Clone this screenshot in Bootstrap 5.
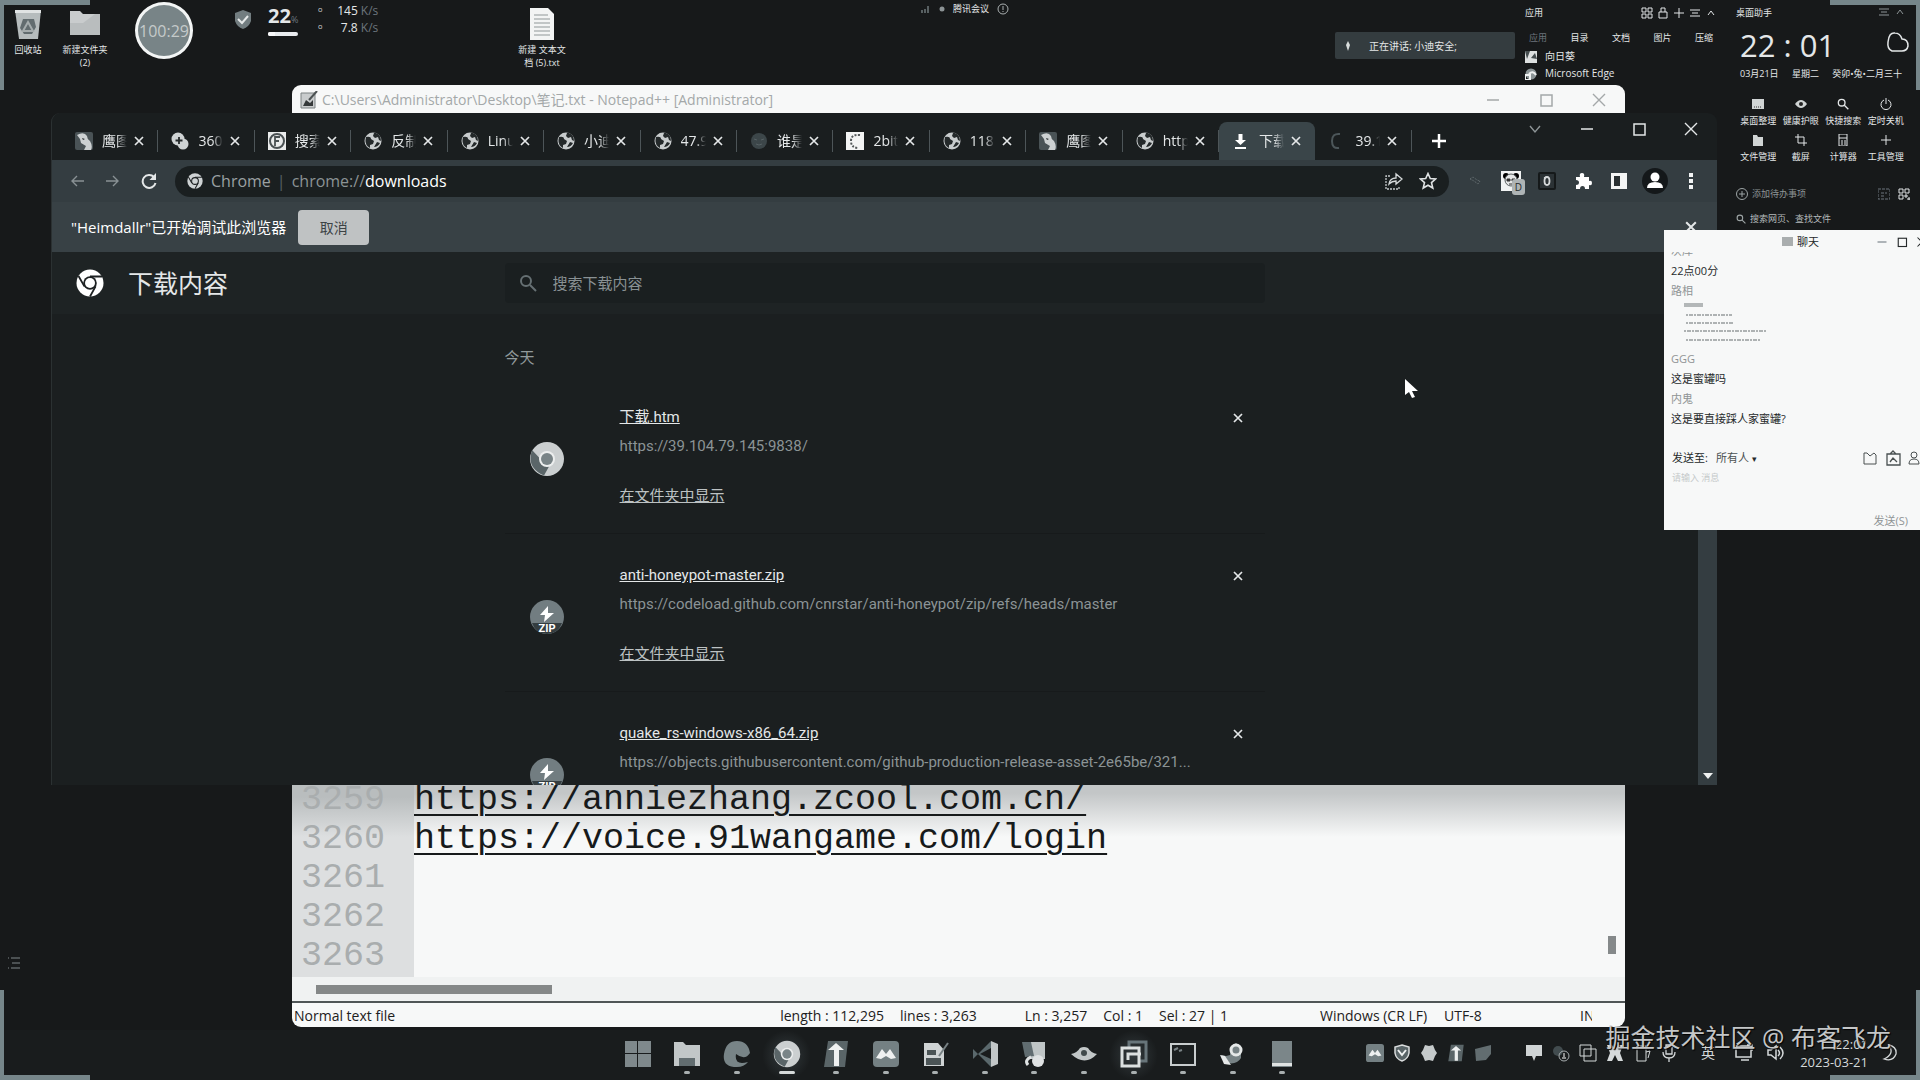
<!DOCTYPE html>
<html lang="zh-CN">
<head>
<meta charset="utf-8">
<meta name="viewport" content="width=device-width, initial-scale=1">
<title>桌面</title>
<link rel="stylesheet" href="https://cdn.jsdelivr.net/npm/bootstrap@5.3.0/dist/css/bootstrap.min.css">
<style>
:root{--ink:#17191a;--strip:#1a1e1f;--bar:#343d41;--pale:#f7f8f8;--soft:#b9bdbe;--dim:#7d8588}
body{background:var(--ink);color:#e4e7e8;font-family:"Open Sans","Noto Sans CJK SC",sans-serif;font-size:14px;line-height:20px}
.desk{min-height:100vh;overflow:hidden}
svg{display:block;flex:none}
.i10{width:10px;height:10px}.i12{width:12px;height:12px}.i16{width:16px;height:16px}.i18{width:18px;height:18px}.i28{width:28px;height:28px}.i36{width:36px;height:36px}
.ln{fill:none;stroke:currentColor;stroke-width:2}
.bare{background:none;border:0;padding:0;color:inherit;display:flex;align-items:center;justify-content:center;flex:none}
a{color:inherit}
.brk{position:absolute;width:90px;height:90px;border:0 solid #76868a}
.brk-tl{left:0;top:0;border-left-width:4px;border-top-width:5px}
.brk-tr{right:0;top:0;border-right-width:4px;border-top-width:5px}
.brk-bl{left:0;bottom:0;border-left-width:4px;border-bottom-width:5px;z-index:6}
.brk-br{right:0;bottom:0;border-right-width:4px;border-bottom-width:5px;z-index:6}
.tiny{font-size:9px;line-height:13px}
.sm11{font-size:11px;line-height:17px}
/* desktop shortcuts and widgets */
.shortcut{position:absolute;top:7px;width:56px;text-align:center;text-decoration:none}
.shortcut svg{margin:0 auto 2px}
.timer{position:absolute;left:135px;top:2px;width:58px;height:57px;border:3px solid #f3f5f5;border-radius:50%;background:#788487;color:#c5caca;font-size:16px}
.netbox{position:absolute;left:234px;top:2px}
.speed{font-size:12px;line-height:17px;width:52px}
.meet{position:absolute;left:921px;top:2px}
.talk{position:absolute;right:405px;top:32px;width:180px;height:27px;background:#343c3f;border-radius:2px;font-size:10px}
.apps{position:absolute;right:203px;top:6px;width:192px}
.helper{position:absolute;right:10px;top:6px;width:178px}
.clock{font-size:31px;line-height:36px}
.toolgrid{display:grid;grid-template-columns:repeat(4,1fr);row-gap:7px;margin-top:18px;padding:0 3px 0 5px}
.leftlist{position:absolute;left:8px;bottom:111px;color:#5d6365}
/* notepad window */
.note{position:absolute;left:292px;right:295px;top:85px;bottom:53px;background:var(--pale);border-radius:9px;color:#222627;overflow:hidden}
.note-title{height:30px;color:#a4a8a9;font-size:14px;padding-left:8px}
.note-title .bare{width:53px}
.editor{font-family:"Liberation Mono",monospace;font-size:35px;line-height:39px;background:linear-gradient(to top,#f7f8f8 140px,#c3c6c7 184px)}
.gutter{width:122px;padding:0 0 0 9px;color:#a9adae;background:linear-gradient(to top,#dddfe0 140px,#b9bdbe 180px);white-space:pre}
.gutter,.lines{display:flex;flex-direction:column;justify-content:flex-end;padding-bottom:1px}
.lines a{color:#171a1b;text-decoration-thickness:2px;text-underline-offset:5px}
.lines span,.lines a{display:block;height:39px;white-space:pre}
.vthumb{position:absolute;right:9px;bottom:73px;width:8px;height:18px;background:#85898a}
.hscroll{height:24px;background:#f0f2f2;padding:8px 24px}
.hthumb{width:236px;height:9px;background:#858888}
.status{height:26px;border-top:2px solid #505657;font-size:14px;line-height:25px;color:#1d2021;white-space:nowrap;padding-left:2px}
/* browser window */
.chrome{position:absolute;left:51px;right:203px;top:113px;height:672px;background:var(--strip);border-radius:9px 9px 0 0;overflow:hidden;border-left:1px solid #2b3132}
.chrome>*{flex-shrink:0}
.strip{height:47px;padding:9px 0 0 10px}
.tabset{width:1350px}
.newtab{margin-left:20px}
.tabx{flex:1 1 0;height:38px;padding:0 14px 0 13px;border-radius:8px 8px 0 0;position:relative}
.tabx::after{content:"";position:absolute;right:0;top:8px;height:22px;border-right:1px solid #4d5558}
.tabx.on{background:#3a4549}.tabx.on::after{border:0}
.tabname{width:25px;margin-left:9px;overflow:hidden;white-space:nowrap;font-size:14px;-webkit-mask:linear-gradient(to right,#000 60%,transparent)}
.tabx .bare{margin-left:7px}
.winbtn{width:52px;height:32px}
.tools{height:42px;background:var(--bar);padding-left:7px}
.omni{height:31px;border-radius:16px;background:#1a1f20;padding:0 12px;font-size:16px}
.omni input{background:none;border:0;color:#fff;width:120px;padding:0;outline:0}
.bar-sep{margin:0 6px;color:#566063}
.extb{width:36px;height:30px}
.dbadge{position:absolute;left:19px;top:13px;width:13px;height:16px;border-radius:3px;background:#aeb4b5;color:#24292a;font-size:10px;line-height:16px;text-align:center}
.infobar{height:50px;background:#384145;padding:0 20px 0 19px;font-size:15px}
.cancel{width:71px;height:35px;background:#bfc2c3;color:#3c4345;border-radius:4px;font-size:14px;margin-left:12px}
.pagehead,.pagecols{display:grid;grid-template-columns:1fr 760px 1fr}
.pagehead{height:62px;background:#1e2324}
.finder{height:40px;background:#1a1f20;border-radius:4px;padding:0 14px}
.finder input{background:none;border:0;color:#dfe2e3;font-size:15px;outline:0;padding:0}
.finder input::placeholder{color:#899194;opacity:1}
.pagebody{flex:1 1 0;min-height:0;background:#1b1f20;font-family:Roboto,"Noto Sans CJK SC",sans-serif;font-size:15px;position:relative;padding-top:34px}
.dl{height:158px;padding:29px 18px 0 24px;border-bottom:1px solid #171a1b}
.dl-pic{margin-top:36px}
.dl-text{margin-left:55px;line-height:24px}
.dl-url{color:#8b9395;margin-top:5px}
.dl-open{margin-top:26px;color:#bdc2c3}
.pagebar{position:absolute;right:0;top:0;bottom:0;width:19px;background:var(--bar)}
.cursor{position:absolute;left:1404px;top:379px}
/* chat window */
.chat{position:absolute;right:0;top:230px;width:256px;height:300px;background:var(--pale);color:#262a2b;overflow:hidden;font-size:11px;z-index:3}
.chat-head{height:23px;padding-left:118px;flex:none}
.chat-log{padding-left:7px;margin-top:-12px}
.chat-log div{height:20px;line-height:20px}
.cut{clip-path:inset(11px 0 0 0)}
.chat .who{color:#8f9495}
.chat select{border:0;background:none;color:#4b5152;font-size:11px;width:36px;padding:0;appearance:none}
.chat textarea{border:0;background:none;resize:none;height:44px;padding:0 8px;outline:0;font-size:9px}
.chat textarea::placeholder{color:#c5c9ca}
.send{height:18px}
/* taskbar */
.task{position:absolute;left:0;right:0;bottom:0;height:50px;background:#191c1d}
.dock{width:694px;height:50px;margin:0 auto}
.dock .bare{flex:1;flex-direction:column;padding-top:4px}
.pip{width:6px;height:3px;background:#a9afb0;border-radius:2px;margin-top:3px}
.pip.wide{width:16px;background:#d5d9d9}
.dock .lit{background:radial-gradient(#333a3d,transparent 70%)}
.tray{position:absolute;right:10px;top:0;height:46px;color:#d5d9da}
.tray .bare{width:27px}
.tray .w36{width:36px}
.when{width:79px;font-size:13px;line-height:18px;text-align:right}
.wmark{position:absolute;right:29px;bottom:24px;font-size:25px;line-height:38px;color:#c4c6c7;z-index:7;white-space:nowrap;text-shadow:1px 1px 1px #000}
</style>
<script src="https://cdn.jsdelivr.net/npm/bootstrap@5.3.0/dist/js/bootstrap.bundle.min.js"></script>
</head>
<body>
<svg width="0" height="0" class="position-absolute" aria-hidden="true">
<symbol id="x" viewBox="0 0 10 10"><path d="M1 1l8 8M9 1L1 9" fill="none" stroke="currentColor" stroke-width="1.7"/></symbol>
<symbol id="xt" viewBox="0 0 16 16"><path d="M2 2l12 12M14 2L2 14" fill="none" stroke="currentColor" stroke-width="1.4"/></symbol>
<symbol id="min" viewBox="0 0 16 16"><path d="M2 8h12" stroke="currentColor" stroke-width="1.4"/></symbol>
<symbol id="max" viewBox="0 0 16 16"><rect x="3" y="3" width="11" height="11" fill="none" stroke="currentColor" stroke-width="1.5"/></symbol>
<symbol id="globe" viewBox="0 0 18 18"><circle cx="9" cy="9" r="8.5" fill="#c8cccd"/><path d="M2 5q5-1 5 2l3 2-1 3-3 1v3Q1 13 1.500 8zM10 1l-1 3 2 2 3-1 1 3 2 1q0-6-5-8zM13 10l-3 5q4 0 6-4z" fill="#24292a"/></symbol>
<symbol id="crm" viewBox="0 0 28 28"><circle cx="14" cy="14" r="13.500" fill="currentColor"/><circle cx="14" cy="14" r="6.800" fill="#1d2122"/><circle cx="14" cy="14" r="5" fill="currentColor"/><path d="M14 7.500h12M8.400 17.400L2.500 7M19.600 17.400L14 27.500" stroke="#1d2122" stroke-width="1.800"/></symbol>
<symbol id="eagle" viewBox="0 0 18 18"><rect width="18" height="18" rx="2" fill="#4a5356"/><path d="M2 3q7-4 10 1 0 3 3 5 3 5 1 9H9l2-4-5-3-1-4z" fill="#cdd1d2"/><path d="M7 6l3 1-2 1z" fill="#24292a"/></symbol>
<symbol id="plus3" viewBox="0 0 18 18"><circle cx="7" cy="7" r="6.500" fill="#cfd3d4"/><circle cx="12" cy="12" r="5.500" fill="#cfd3d4"/><path d="M8 5v7M4.500 8.500h7" stroke="#24292a" stroke-width="1.800"/></symbol>
<symbol id="fic" viewBox="0 0 18 18"><rect width="18" height="18" fill="#e9ebeb"/><circle cx="9" cy="9" r="7" fill="none" stroke="#4a5153" stroke-width="2"/><path d="M7 14V5h5M7 9h4" fill="none" stroke="#4a5153" stroke-width="1.800"/></symbol>
<symbol id="blob" viewBox="0 0 18 18"><circle cx="9" cy="9" r="8" fill="#3c4649"/><path d="M4 7l3 1m4 0l3-1M6 12q3 2 6 0" stroke="#566164" fill="none"/></symbol>
<symbol id="cring" viewBox="0 0 18 18"><rect width="18" height="18" fill="#f3f4f4"/><path d="M14 3Q5 2 5 9t8 7" fill="none" stroke="#54595b" stroke-width="2" stroke-dasharray="2 1.500"/></symbol>
<symbol id="down" viewBox="0 0 18 18"><path d="M6.500 2h4v6h3.500L8.500 13 3 8h3.500zM3 15h11v2H3z" fill="#fff"/></symbol>
<symbol id="load" viewBox="0 0 18 18"><path d="M12 2Q4 1 4 9t7 7" fill="none" stroke="#4c5659" stroke-width="2"/></symbol>
<symbol id="mag" viewBox="0 0 18 18"><circle cx="7" cy="7" r="5" class="ln"/><path d="M11 11l6 6" class="ln"/></symbol>
<symbol id="zip" viewBox="0 0 36 36"><circle cx="18" cy="18" r="17" fill="#727d81"/><path d="M3 24h30q-4 11-15 11T3 24z" fill="#343d40"/><path d="M19 7l-8 9h5l-1 7 10-9h-6z" fill="#fff"/></symbol>
<symbol id="dlc" viewBox="0 0 36 36"><circle cx="18" cy="18" r="17" fill="#cbcfd0"/><path d="M3 9Q-3 27 15 34.500l5-9q-8 0-9-8z" fill="#5a6568"/><circle cx="18" cy="18" r="8" fill="#eceeee"/><circle cx="18" cy="18" r="6" fill="#798487"/></symbol>
<symbol id="ebox" viewBox="0 0 18 18"><rect x="1" y="1" width="16" height="16" rx="1" fill="#2b3235" stroke="#15191a" stroke-width="2"/><ellipse cx="9" cy="9" rx="2.500" ry="4" fill="none" stroke="#d5d9da" stroke-width="1.800"/><path d="M6 6l3-1" stroke="#d5d9da" stroke-width="1.500"/></symbol>
</svg>
<main class="desk position-relative">
<i class="brk brk-tl"></i><i class="brk brk-tr"></i><i class="brk brk-bl"></i><i class="brk brk-br"></i>

<a href="#" class="shortcut tiny" style="left:0"><svg width="28" height="34" viewBox="0 0 28 34"><path d="M1 3h26l-3 29H5z" fill="#b6bcbd"/><path d="M1 3h26v3H1z" fill="#e0e3e3"/><path d="M9 12h11l2 8-4 7h-8l-4-6z" fill="#626c6f"/><path d="M9 24l5-9 5 9z" fill="none" stroke="#a5acad" stroke-width="2"/></svg>回收站</a>
<a href="#" class="shortcut tiny" style="left:57px"><svg width="32" height="34" viewBox="0 0 32 34"><path d="M1 4h10l3 3h17v21H1z" fill="#c9cccd"/><path d="M1 28V16h13L26 7h5v21z" fill="#b9bdbe"/></svg>新建文件夹<br>(2)</a>
<a href="#" class="shortcut tiny" style="left:514px"><svg width="26" height="34" viewBox="0 0 26 34"><path d="M1 1h18l6 6v26H1z" fill="#f3f4f4"/><path d="M5 8h14M5 12h16M5 16h16M5 20h16M5 24h16M5 28h16" stroke="#909798"/></svg>新建 文本文<br>档 (5).txt</a>
<div class="timer d-flex align-items-center justify-content-center">100:29</div>
<div class="netbox d-flex gap-3">
<svg class="mt-2" width="18" height="19" viewBox="0 0 18 19"><path d="M9 0l8 3v8q-2 6-8 8-6-2-8-8V3z" fill="#727d80"/><path d="M4 9l4 4 6-7" fill="none" stroke="#e6e9e9" stroke-width="2"/></svg>
<div class="pt-1"><b class="fs-5">22</b><span class="tiny text-secondary">%</span><div class="progress mt-1" style="height:4px;width:30px"><div class="progress-bar bg-light" style="width:22%"></div></div></div>
<div class="d-flex gap-1"><div class="speed" style="width:8px"><div>◦</div><div>◦</div></div><div class="speed text-end"><div>145 <span class="text-secondary">K/s</span></div><div>7.8 <span class="text-secondary">K/s</span></div></div></div>
</div>
<div class="meet tiny d-flex align-items-center gap-2"><svg class="i10" viewBox="0 0 10 10"><path d="M1 9V6m3 3V5m3 4V2" stroke="#586062" stroke-width="2"/></svg><svg width="6" height="8" viewBox="0 0 6 8"><circle cx="3" cy="4" r="2.500" fill="#8c9395"/></svg><span>腾讯会议</span><svg class="i12" viewBox="0 0 12 12"><circle cx="6" cy="6" r="5" fill="none" stroke="#aab0b1"/><path d="M6 3v4m0 1v1" stroke="#aab0b1"/></svg></div>
<div class="talk d-flex align-items-center"><svg class="ms-2 me-3 i10" viewBox="0 0 10 10"><path d="M5 0l2 4-2 6-2-6z" fill="#d8dcdc"/></svg>正在讲话: 小迪安全;</div>

<section class="apps tiny">
<div class="d-flex justify-content-between align-items-center mb-2"><span>应用</span><div class="d-flex gap-1"><svg class="i12" viewBox="0 0 12 12"><path d="M1 1h4v4H1zM7 1h4v4H7zM1 7h4v4H1zM7 7h4v4H7z" fill="none" stroke="currentColor"/></svg><svg class="i12" viewBox="0 0 12 12"><path d="M2 5h8v6H2zM4 5V1h4v4" fill="none" stroke="currentColor"/></svg><svg class="i12" viewBox="0 0 12 12"><path d="M6 1v10M1 6h10" stroke="currentColor"/></svg><svg class="i12" viewBox="0 0 12 12"><path d="M1 3h10M3 6h6M1 9h10" stroke="currentColor"/></svg><svg class="i12" viewBox="0 0 12 12"><path d="M3 8l3-4 3 4" fill="none" stroke="currentColor"/></svg></div></div>
<nav class="d-flex justify-content-between px-1 pt-1"><span class="text-secondary">应用</span><span>目录</span><span>文档</span><span>图片</span><span>压缩</span></nav>
<div class="sm11 d-flex align-items-center gap-1 mt-1"><svg class="i12 me-1" viewBox="0 0 12 12"><path d="M0 0h12v12H0z" fill="#dde0e0"/><path d="M0 0h5L2 8zM6 7l4-5 2 6z" fill="#454d4f"/></svg><span style="font-size:10px">向日葵</span></div>
<div class="sm11 d-flex align-items-center gap-1"><svg class="i12 me-1" viewBox="0 0 12 12"><circle cx="6" cy="6" r="5.500" fill="#8b9496"/><path d="M0 7h5v5H0zM4 6q4-4 7 1" fill="none" stroke="#eef0f0" stroke-width="2"/></svg><span style="font-size:10px">Microsoft Edge</span></div>
</section>

<section class="helper tiny">
<div class="d-flex justify-content-between ps-1"><span>桌面助手</span><div class="d-flex gap-1 pe-1"><svg class="i12" viewBox="0 0 12 12"><path d="M1 3h10M3 6h6M1 9h10" stroke="#8d9496"/></svg><svg class="i12" viewBox="0 0 12 12"><path d="M3 8l3-4 3 4" fill="none" stroke="#8d9496"/></svg></div></div>
<div class="d-flex justify-content-between align-items-start mt-1 ps-2"><div class="clock pt-1">22 : 01</div><svg class="mt-2" width="24" height="22" viewBox="0 0 24 22"><path d="M6 20q-5-2-4-9Q3 1 9 2q5 0 7 6 6 0 6 7-1 5-6 5z" fill="none" stroke="currentColor" stroke-width="1.500"/></svg></div>
<div class="d-flex justify-content-between ps-2 pe-2 mt-1"><span>03月21日</span><span>星期二</span><span>癸卯•兔•二月三十</span></div>
<div class="toolgrid text-center">
<div><svg class="i12 mx-auto mb-1" viewBox="0 0 12 12"><path d="M0 1h12v10H0z" fill="#d0d4d4"/><path d="M2 9h8" stroke="#333" stroke-dasharray="1 1"/></svg>桌面整理</div>
<div><svg class="i12 mx-auto mb-1" viewBox="0 0 12 12"><path d="M0 6q6-8 12 0-6 8-12 0z" fill="#d0d4d4"/><circle cx="6" cy="6" r="2" fill="#222"/></svg>健康护眼</div>
<div><svg class="i12 mx-auto mb-1"><use href="#mag"/></svg>快捷搜索</div>
<div><svg class="i12 mx-auto mb-1" viewBox="0 0 12 12"><path d="M4 2a5 5 0 1 0 4 0M6 0v6" fill="none" stroke="currentColor"/></svg>定时关机</div>
<div><svg class="i12 mx-auto mb-1" viewBox="0 0 12 12"><path d="M1 1h4l1 2h5v9H1z" fill="#d0d4d4"/></svg>文件管理</div>
<div><svg class="i12 mx-auto mb-1" viewBox="0 0 12 12"><path d="M3 0v9h9M0 3h9v9" fill="none" stroke="currentColor"/></svg>截屏</div>
<div><svg class="i12 mx-auto mb-1" viewBox="0 0 12 12"><path d="M2 0h8v12H2zM2 4h8M5 6v5M8 6v5" fill="none" stroke="currentColor"/></svg>计算器</div>
<div><svg class="i12 mx-auto mb-1" viewBox="0 0 12 12"><path d="M6 1v10M1 6h10" stroke="currentColor"/></svg>工具管理</div>
</div>
<div class="d-flex align-items-center gap-1 mt-4 ps-1"><svg class="i12" viewBox="0 0 12 12"><circle cx="6" cy="6" r="5.500" fill="none" stroke="#9da4a5"/><path d="M6 3v6M3 6h6" stroke="#9da4a5"/></svg><span class="me-auto" style="color:#8d9496">添加待办事项</span><svg class="i12 me-1 text-secondary" viewBox="0 0 12 12"><path d="M0 1h12v10H0zM3 5h6M3 8h4" fill="none" stroke="currentColor" stroke-dasharray="3 1"/></svg><svg class="i12" viewBox="0 0 12 12"><path d="M1 1h4v4H1zM7 1h4v4H7zM1 7h4v4H1zM7 7h2v2H7zM10 10h2v2h-2z" fill="none" stroke="currentColor"/></svg></div>
<div class="d-flex align-items-center gap-1 mt-2 pt-1 ps-1"><svg class="i10" style="color:#9da4a5"><use href="#mag"/></svg><span style="color:#b5babb">搜索网页、查找文件</span></div>
</section>
<svg class="leftlist" width="12" height="12" viewBox="0 0 12 12"><path d="M3 1h9M4 6h8M3 11h9M0 1h1M0 11h1" stroke="currentColor" stroke-width="1.500"/></svg>

<section class="note d-flex flex-column">
<header class="note-title d-flex align-items-center"><svg class="i18" viewBox="0 0 18 18"><path d="M1 2h14v15H1z" fill="#c9cccd" stroke="#7c8283"/><path d="M3 15l3-6 4 3 3-3v6z" fill="#35393a"/><path d="M9 9l8-9" stroke="#4c5253" stroke-width="2"/></svg><span class="me-auto ms-1 text-nowrap">C:\Users\Administrator\Desktop\笔记.txt - Notepad++ [Administrator]</span>
<button class="bare" aria-label="最小化"><svg class="i16"><use href="#min"/></svg></button><button class="bare" aria-label="最大化"><svg class="i16"><use href="#max"/></svg></button><button class="bare" aria-label="关闭"><svg class="i16"><use href="#xt"/></svg></button></header>
<div class="editor d-flex flex-grow-1 overflow-hidden"><div class="gutter"><span>3259</span><span>3260</span><span>3261</span><span>3262</span><span>3263</span></div>
<div class="lines"><a href="#">https://anniezhang.zcool.com.cn/</a><a href="#">https://voice.91wangame.com/login</a><span></span><span></span><span></span></div></div>
<i class="vthumb"></i>
<div class="hscroll"><div class="hthumb"></div></div>
<footer class="status d-flex"><span class="me-auto">Normal text file</span><div class="d-flex"><span class="me-3">length : 112,295</span><span class="me-5">lines : 3,263</span><span class="me-3">Ln : 3,257</span><span class="me-3">Col : 1</span><span style="width:161px">Sel : 27 | 1</span><span style="width:124px">Windows (CR LF)</span><span style="width:136px">UTF-8</span><span class="overflow-hidden" style="width:12px;margin-right:33px">INS</span></div></footer>
</section>

<section class="chrome d-flex flex-column">
<header class="strip d-flex">
<div class="tabset d-flex">
<div class="tabx d-flex align-items-center"><svg class="i18"><use href="#eagle"/></svg><span class="tabname">鹰图</span><button class="bare" aria-label="关闭标签"><svg class="i10"><use href="#x"/></svg></button></div>
<div class="tabx d-flex align-items-center"><svg class="i18"><use href="#plus3"/></svg><span class="tabname">360</span><button class="bare" aria-label="关闭标签"><svg class="i10"><use href="#x"/></svg></button></div>
<div class="tabx d-flex align-items-center"><svg class="i18"><use href="#fic"/></svg><span class="tabname">搜索</span><button class="bare" aria-label="关闭标签"><svg class="i10"><use href="#x"/></svg></button></div>
<div class="tabx d-flex align-items-center"><svg class="i18"><use href="#globe"/></svg><span class="tabname">反制</span><button class="bare" aria-label="关闭标签"><svg class="i10"><use href="#x"/></svg></button></div>
<div class="tabx d-flex align-items-center"><svg class="i18"><use href="#globe"/></svg><span class="tabname">Linu</span><button class="bare" aria-label="关闭标签"><svg class="i10"><use href="#x"/></svg></button></div>
<div class="tabx d-flex align-items-center"><svg class="i18"><use href="#globe"/></svg><span class="tabname">小迪</span><button class="bare" aria-label="关闭标签"><svg class="i10"><use href="#x"/></svg></button></div>
<div class="tabx d-flex align-items-center"><svg class="i18"><use href="#globe"/></svg><span class="tabname">47.9</span><button class="bare" aria-label="关闭标签"><svg class="i10"><use href="#x"/></svg></button></div>
<div class="tabx d-flex align-items-center"><svg class="i18"><use href="#blob"/></svg><span class="tabname">谁是</span><button class="bare" aria-label="关闭标签"><svg class="i10"><use href="#x"/></svg></button></div>
<div class="tabx d-flex align-items-center"><svg class="i18"><use href="#cring"/></svg><span class="tabname">2bit</span><button class="bare" aria-label="关闭标签"><svg class="i10"><use href="#x"/></svg></button></div>
<div class="tabx d-flex align-items-center"><svg class="i18"><use href="#globe"/></svg><span class="tabname">118</span><button class="bare" aria-label="关闭标签"><svg class="i10"><use href="#x"/></svg></button></div>
<div class="tabx d-flex align-items-center"><svg class="i18"><use href="#eagle"/></svg><span class="tabname">鹰图</span><button class="bare" aria-label="关闭标签"><svg class="i10"><use href="#x"/></svg></button></div>
<div class="tabx d-flex align-items-center"><svg class="i18"><use href="#globe"/></svg><span class="tabname">http</span><button class="bare" aria-label="关闭标签"><svg class="i10"><use href="#x"/></svg></button></div>
<div class="tabx on d-flex align-items-center"><svg class="i18"><use href="#down"/></svg><span class="tabname">下载</span><button class="bare" aria-label="关闭标签"><svg class="i10"><use href="#x"/></svg></button></div>
<div class="tabx d-flex align-items-center"><svg class="i18"><use href="#load"/></svg><span class="tabname">39.1</span><button class="bare" aria-label="关闭标签"><svg class="i10"><use href="#x"/></svg></button></div>
</div>
<button class="bare newtab" aria-label="新标签页"><svg width="14" height="14" viewBox="0 0 14 14"><path d="M7 0v14M0 7h14" stroke="#fff" stroke-width="2.500"/></svg></button>
<div class="d-flex ms-auto" style="margin-top:-9px">
<button class="bare winbtn" aria-label="搜索标签"><svg class="i16" viewBox="0 0 16 16"><path d="M3 5l5 6 5-6" fill="none" stroke="#8d9496" stroke-width="1.400"/></svg></button><button class="bare winbtn" aria-label="最小化"><svg class="i16"><use href="#min"/></svg></button><button class="bare winbtn" aria-label="最大化"><svg class="i16"><use href="#max"/></svg></button><button class="bare winbtn" aria-label="关闭"><svg class="i16"><use href="#xt"/></svg></button>
</div>
</header>
<div class="tools d-flex align-items-center">
<button class="bare extb" aria-label="后退"><svg class="i16" viewBox="0 0 16 16"><path d="M15 8H3m5-5L3 8l5 5" fill="none" stroke="#899194" stroke-width="1.400"/></svg></button>
<button class="bare extb" aria-label="前进"><svg class="i16" viewBox="0 0 16 16"><path d="M1 8h12M8 3l5 5-5 5" fill="none" stroke="#899194" stroke-width="1.400"/></svg></button>
<button class="bare extb" aria-label="重新加载"><svg class="i16" viewBox="0 0 16 16"><path d="M13 4A6.500 6.500 0 1 0 14.500 10" class="ln"/><path d="M15 0v7H8.500z" fill="currentColor"/></svg></button>
<div class="omni d-flex align-items-center flex-grow-1 ms-2"><svg class="i16" style="color:#cfd3d4"><use href="#crm"/></svg><span class="ms-2 text-nowrap" style="color:#9aa1a3">Chrome</span><span class="bar-sep">|</span><label for="addr" style="color:#8b9395">chrome://</label><input id="addr" value="downloads">
<div class="d-flex gap-3 ms-auto"><svg class="i18" viewBox="0 0 18 18"><path d="M5 4H1v13h13v-3" fill="none" stroke="#c5cacb" stroke-width="1.300" stroke-dasharray="2 1"/><path d="M4 12q1-6 7-6V2l6 5-6 5V9q-4 0-7 3z" fill="none" stroke="#d5d9da" stroke-width="1.300"/></svg><svg class="i18" viewBox="0 0 18 18"><path d="M9 1.500l2.300 5 5.200.500-4 3.600 1.300 5.400L9 13.200 4.200 16l1.300-5.400-4-3.600 5.200-.5z" fill="none" stroke="#dfe2e3" stroke-width="1.600"/></svg></div></div>
<div class="d-flex ms-2 pe-2">
<button class="bare extb" aria-label="扩展"><svg class="i16" viewBox="0 0 16 16"><path d="M3 6l3-2 4 3 3 1-2 3-4-3z" fill="none" stroke="#6b7578" stroke-dasharray="1 1"/></svg></button>
<button class="bare extb position-relative" aria-label="熊猫扩展"><svg width="20" height="20" viewBox="0 0 20 20"><path d="M0 0h20v20H0z" fill="#f1f3f3"/><circle cx="5" cy="5" r="3"/><circle cx="15" cy="5" r="3"/><circle cx="10" cy="9" r="6" fill="#e5e7e7" stroke="#5a6062"/><path d="M6 8h3v2H6zm5 0h3v2h-3zM8 13h4" fill="#333" stroke="#333"/></svg><span class="dbadge">D</span></button>
<button class="bare extb" aria-label="扩展"><svg class="i18"><use href="#ebox"/></svg></button>
<button class="bare extb" aria-label="扩展程序"><svg class="i18" viewBox="0 0 18 18"><path d="M2 5h4q-1-4 2-4t2 4h5v4q3-1 3 2t-3 2v4h-4q0-3-2.500-3T6 17H2v-4q3 0 3-2.500T2 8z" fill="#fff"/></svg></button>
<button class="bare extb" aria-label="侧边栏"><svg class="i18" viewBox="0 0 18 18"><path d="M1 1h16v16H1z" fill="#f4f5f5"/><path d="M4 4h6v10H4z" fill="#2a3032"/></svg></button>
<button class="bare extb" aria-label="用户"><svg width="26" height="26" viewBox="0 0 26 26"><circle cx="13" cy="13" r="13" fill="#14181a"/><circle cx="13" cy="9" r="4.500" fill="#fff"/><path d="M5 20q0-6 8-6t8 6z" fill="#fff"/></svg></button>
<button class="bare extb" aria-label="菜单"><svg class="i18" viewBox="0 0 18 18"><path d="M9 1v4M9 7v4M9 13v4" stroke="#f2f4f4" stroke-width="4"/></svg></button>
</div></div>
<div class="infobar d-flex align-items-center"><span class="text-white">"Heimdallr"已开始调试此浏览器</span><button class="btn cancel p-0">取消</button><button class="bare ms-auto" aria-label="关闭提示"><svg class="i12"><use href="#x"/></svg></button></div>
<div class="pagehead align-items-center"><div class="d-flex align-items-center ps-4"><svg class="i28 text-white"><use href="#crm"/></svg><h1 class="m-0 ms-4 fw-normal" style="font-size:25px">下载内容</h1></div>
<div class="finder d-flex align-items-center gap-3"><label for="q" aria-label="搜索"><svg class="i18" style="color:#667073"><use href="#mag"/></svg></label><input id="q" type="search" placeholder="搜索下载内容"></div></div>
<div class="pagebody overflow-hidden"><div class="pagecols"><div></div><div>
<div style="color:#929a9c">今天</div>
<div class="mt-2">
<article class="dl d-flex align-items-start"><svg class="i36 dl-pic"><use href="#dlc"/></svg><div class="dl-text me-auto"><a href="#">下载.htm</a><div class="dl-url">https://39.104.79.145:9838/</div><div class="dl-open"><a href="#">在文件夹中显示</a></div></div><button class="bare i18 mt-1" aria-label="移除"><svg class="i10"><use href="#x"/></svg></button></article>
<article class="dl d-flex align-items-start"><svg class="i36 dl-pic" viewBox="0 0 36 36"><use href="#zip"/><text x="18" y="33" text-anchor="middle" font-size="11" font-weight="700" fill="#fff">ZIP</text></svg><div class="dl-text me-auto"><a href="#">anti-honeypot-master.zip</a><div class="dl-url">https://codeload.github.com/cnrstar/anti-honeypot/zip/refs/heads/master</div><div class="dl-open"><a href="#">在文件夹中显示</a></div></div><button class="bare i18 mt-1" aria-label="移除"><svg class="i10"><use href="#x"/></svg></button></article>
<article class="dl d-flex align-items-start"><svg class="i36 dl-pic" viewBox="0 0 36 36"><use href="#zip"/><text x="18" y="33" text-anchor="middle" font-size="11" font-weight="700" fill="#fff">ZIP</text></svg><div class="dl-text me-auto"><a href="#">quake_rs-windows-x86_64.zip</a><div class="dl-url">https://objects.githubusercontent.com/github-production-release-asset-2e65be/321...</div></div><button class="bare i18 mt-1" aria-label="移除"><svg class="i10"><use href="#x"/></svg></button></article>
</div></div><div></div></div>
<div class="pagebar d-flex align-items-end justify-content-center pb-1"><svg class="i10" viewBox="0 0 10 10"><path d="M0 2h10L5 8z" fill="#eef0f0"/></svg></div>
</div>
</section>
<svg class="cursor" width="15" height="20" viewBox="0 0 15 20"><path d="M1 0v16l4-3 3 6 3-1-3-6h6z" fill="#fff"/></svg>

<section class="chat d-flex flex-column">
<header class="chat-head d-flex align-items-center"><svg width="11" height="10" viewBox="0 0 11 10" class="me-1"><path d="M0 0h11v9H0z" fill="#a9adae"/></svg><span class="me-auto">聊天</span><svg class="i12 me-2 text-secondary"><use href="#min"/></svg><svg class="i12 me-2"><use href="#max"/></svg><svg class="i12" style="margin-right:-8px"><use href="#xt"/></svg></header>
<div class="chat-log"><div class="who cut">灰库</div><div>22点00分</div><div class="who">路相</div>
<svg width="90" height="48" viewBox="0 0 90 48" class="ms-2"><path d="M5 4h19" stroke="#b3b7b8" stroke-width="4"/><path d="M7 14h46M7 22h48M5 30h82M7 39h74" stroke="#aeb2b3" stroke-width="2" stroke-dasharray="2 1 4 1"/></svg>
<div class="who">GGG</div><div>这是蜜罐吗</div><div class="who">内鬼</div><div>这是要直接踩人家蜜罐?</div></div>
<div class="d-flex align-items-center mt-auto ps-2"><label for="to" class="me-2">发送至:</label><select id="to"><option>所有人</option></select><span class="tiny">▾</span>
<svg class="i16 ms-auto" viewBox="0 0 16 16"><path d="M2 3h3l3 3 4-3 2 2v9H2z" fill="none" stroke="#4a5051"/></svg><svg class="i16 ms-2" viewBox="0 0 16 16"><path d="M1 4h13v11H1zM4 4l3-3 3 3M4 12l3-4 4 4" fill="none" stroke="#4a5051" stroke-width="1.300"/></svg><svg width="14" height="16" viewBox="0 0 14 16" class="ms-1"><circle cx="8" cy="5" r="3" fill="none" stroke="#4a5051"/><path d="M3 14q0-5 5-5t5 5z" fill="none" stroke="#4a5051"/></svg></div>
<textarea aria-label="消息" placeholder="请输入 消息"></textarea>
<div class="d-flex justify-content-end pe-2 me-1"><button class="bare who send">发送(S)</button></div>
</section>

<footer class="task">
<div class="dock d-flex">
<button class="bare" aria-label="开始"><svg class="i28" viewBox="0 0 28 28"><path d="M1 1h12v12H1zM14 1h13v12H14zM1 14h12v13H1zM14 14h13v13H14z" fill="#7f898c"/></svg><i class="pip opacity-0"></i></button>
<button class="bare" aria-label="文件"><svg class="i28" viewBox="0 0 28 28"><path d="M1 2h9l3 3h14v21H1z" fill="#c2c7c8"/><path d="M6 26v-8h16v8z" fill="#626d70"/></svg><i class="pip"></i></button>
<button class="bare" aria-label="Edge"><svg class="i28" viewBox="0 0 28 28"><path d="M27 13Q25 1 14 1T1 14t13 13q7 0 11-5-14 4-12-8 9 7 14-1z" fill="#788487"/></svg><i class="pip"></i></button>
<button class="bare lit" aria-label="Chrome"><svg class="i28" viewBox="0 0 36 36"><use href="#dlc"/></svg><i class="pip wide"></i></button>
<button class="bare" aria-label="上传"><svg class="i28" viewBox="0 0 28 28"><path d="M6 1h20l-3 26H2z" fill="#5a6568"/><path d="M14 3l8 7h-5v16h-5V10H6z" fill="#eef0f0"/></svg><i class="pip"></i></button>
<button class="bare" aria-label="会议"><svg class="i28" viewBox="0 0 28 28"><rect x="1" y="1" width="26" height="26" rx="4" fill="#748083"/><path d="M4 18l6-9 4 5 4-5 6 9-5 1-5-3-5 3z" fill="#eef0f0"/></svg><i class="pip"></i></button>
<button class="bare" aria-label="Notepad++"><svg class="i28" viewBox="0 0 28 28"><path d="M3 3h14l6 7v16H3z" fill="#cfd3d4"/><path d="M6 10h9v5H6zM5 18h15v7H5z" fill="#4b5456"/><path d="M18 16L27 3" stroke="#778184" stroke-width="2"/></svg><i class="pip"></i></button>
<button class="bare" aria-label="编辑器"><svg class="i28" viewBox="0 0 28 28"><path d="M20 1l7 3v20l-7 3z" fill="#c2c7c8"/><path d="M20 1L2 19V9l18 18v-8L9 14l11-6z" fill="#5a686c"/></svg><i class="pip"></i></button>
<button class="bare" aria-label="工具"><svg class="i28" viewBox="0 0 28 28"><path d="M10 2h15v17H10z" fill="#bfc5c6"/><path d="M2 2h9l3 14-9 1z" fill="#606c70"/><circle cx="18" cy="21" r="6" fill="#dfe2e3"/><path d="M8 25q-4-5 3-8" stroke="#dfe2e3" stroke-width="3" fill="none"/></svg><i class="pip"></i></button>
<button class="bare" aria-label="查看"><svg class="i28" viewBox="0 0 28 28"><path d="M1 14q6-1 9-6 4-2 8 0 3 5 9 6-12 13-26 0z" fill="#c2c7c8"/><circle cx="14" cy="13" r="3" fill="#414a4c"/></svg><i class="pip"></i></button>
<button class="bare lit" aria-label="虚拟机"><svg class="i28" viewBox="0 0 28 28"><path d="M9 7V2h17v19h-6" fill="none" stroke="#68757a" stroke-width="3"/><path d="M2 8h17v18H2zM8 20V14h13" fill="none" stroke="#dce0e0" stroke-width="3"/></svg><i class="pip"></i></button>
<button class="bare" aria-label="终端"><svg class="i28" viewBox="0 0 28 28"><path d="M2 4h24v21H2z" fill="#1b1f20" stroke="#c8cdce" stroke-width="2"/><path d="M5 10l4-2m1 3l3-1" stroke="#7b8487" stroke-width="2"/></svg><i class="pip"></i></button>
<button class="bare" aria-label="调试"><svg class="i28" viewBox="0 0 28 28"><path d="M2 15l6 8q10 2 14-5V7L17 3l-6 4v8l-4 1z" fill="#778285"/><circle cx="17" cy="10" r="5" fill="none" stroke="#e5e8e8" stroke-width="3"/><path d="M1 15l5 1 6 9-7-1z" fill="#e5e8e8"/></svg><i class="pip"></i></button>
<button class="bare" aria-label="文档"><svg class="i28" viewBox="0 0 28 28"><path d="M4 1h20v26H4z" fill="#7b8689"/><path d="M4 23h20v3H4z" fill="#e0e3e3"/></svg><i class="pip"></i></button>
</div>
<div class="tray d-flex align-items-center">
<button class="bare" aria-label="会议"><svg class="i18" viewBox="0 0 28 28"><rect width="28" height="28" rx="4" fill="#748083"/><path d="M4 18l6-9 4 5 4-5 6 9-5 1-5-3-5 3z" fill="#eef0f0"/></svg></button>
<button class="bare" aria-label="安全"><svg class="i18" viewBox="0 0 18 18"><path d="M9 1l7 2v6q-1 6-7 8-6-2-7-8V3z" fill="#596467" stroke="#d9dcdd" stroke-width="1.500"/><path d="M5 6l4 5 4-5" fill="none" stroke="#f0f2f2" stroke-width="2"/></svg></button>
<button class="bare" aria-label="插件"><svg class="i18" viewBox="0 0 18 18"><path d="M5 1l4 1 4-1 2 5 2 3-2 3-2 5-4-1-4 1-2-5-2-3 2-3z" fill="#c5cacb"/></svg></button>
<button class="bare" aria-label="上传"><svg class="i18" viewBox="0 0 28 28"><path d="M6 1h20l-3 26H2z" fill="#5a6568"/><path d="M14 3l8 7h-5v16h-5V10H6z" fill="#eef0f0"/></svg></button>
<button class="bare" aria-label="工具"><svg class="i18" viewBox="0 0 18 18"><path d="M1 5l8-2 8-2v9l-5 6-10 1z" fill="#626d70"/></svg></button>
<button class="bare ms-4" aria-label="消息"><svg class="i18" viewBox="0 0 18 18"><path d="M1 1h16v11h-6l-2 5-2-5H1z" fill="#d0d4d5"/></svg></button>
<button class="bare" aria-label="微信"><svg class="i18" viewBox="0 0 18 18"><circle cx="6" cy="7" r="5" fill="#424c4f"/><circle cx="12" cy="12" r="5" fill="none" stroke="#a7adaf"/><path d="M12 9v4m-2 1h4" stroke="#fff"/></svg></button>
<button class="bare" aria-label="窗口"><svg class="i18" viewBox="0 0 18 18"><path d="M1 1h11v11H1zM5 5h12v12H5z" fill="none" stroke="currentColor"/></svg></button>
<button class="bare" aria-label="网络"><svg class="i18" viewBox="0 0 18 18"><path d="M1 1h5l3 5 3-5h5l-3 8 3 8h-5l-3-6-3 6H1l3-8z" fill="currentColor"/></svg></button>
<button class="bare" aria-label="电池"><svg class="i18" viewBox="0 0 18 18"><path d="M4 2h9v15H4zM13 8l4-1-2 7" fill="none" stroke="currentColor"/></svg></button>
<button class="bare" aria-label="麦克风"><svg class="i18" viewBox="0 0 18 18"><path d="M6 1h6v9H6zM3 8q0 6 6 6t6-6M9 14v4" fill="none" stroke="currentColor" stroke-width="1.300"/></svg></button>
<button class="bare w36 ms-2">英</button>
<button class="bare w36" aria-label="显示"><svg class="i18" viewBox="0 0 18 18"><path d="M1 2h15v11H1zM6 16h8M12 1h5v6" fill="none" stroke="currentColor" stroke-width="1.500"/></svg></button>
<button class="bare" aria-label="音量"><svg class="i18" viewBox="0 0 18 18"><path d="M1 6h3l5-4v13l-5-4H1zM11 6q3 3 0 6M13 3q6 6 0 12" fill="none" stroke="currentColor" stroke-width="1.500"/></svg></button>
<div class="when">22:01<br>2023-03-21</div>
<button class="bare" style="width:42px" aria-label="勿扰"><svg class="i18" viewBox="0 0 18 18"><path d="M9 1q6 9-5 14 9 3 12-5 1-7-7-9z" fill="none" stroke="currentColor" stroke-width="1.300"/></svg></button>
</div>
</footer>
<div class="wmark">掘金技术社区 @ 布客飞龙</div>
</main>
</body>
</html>
